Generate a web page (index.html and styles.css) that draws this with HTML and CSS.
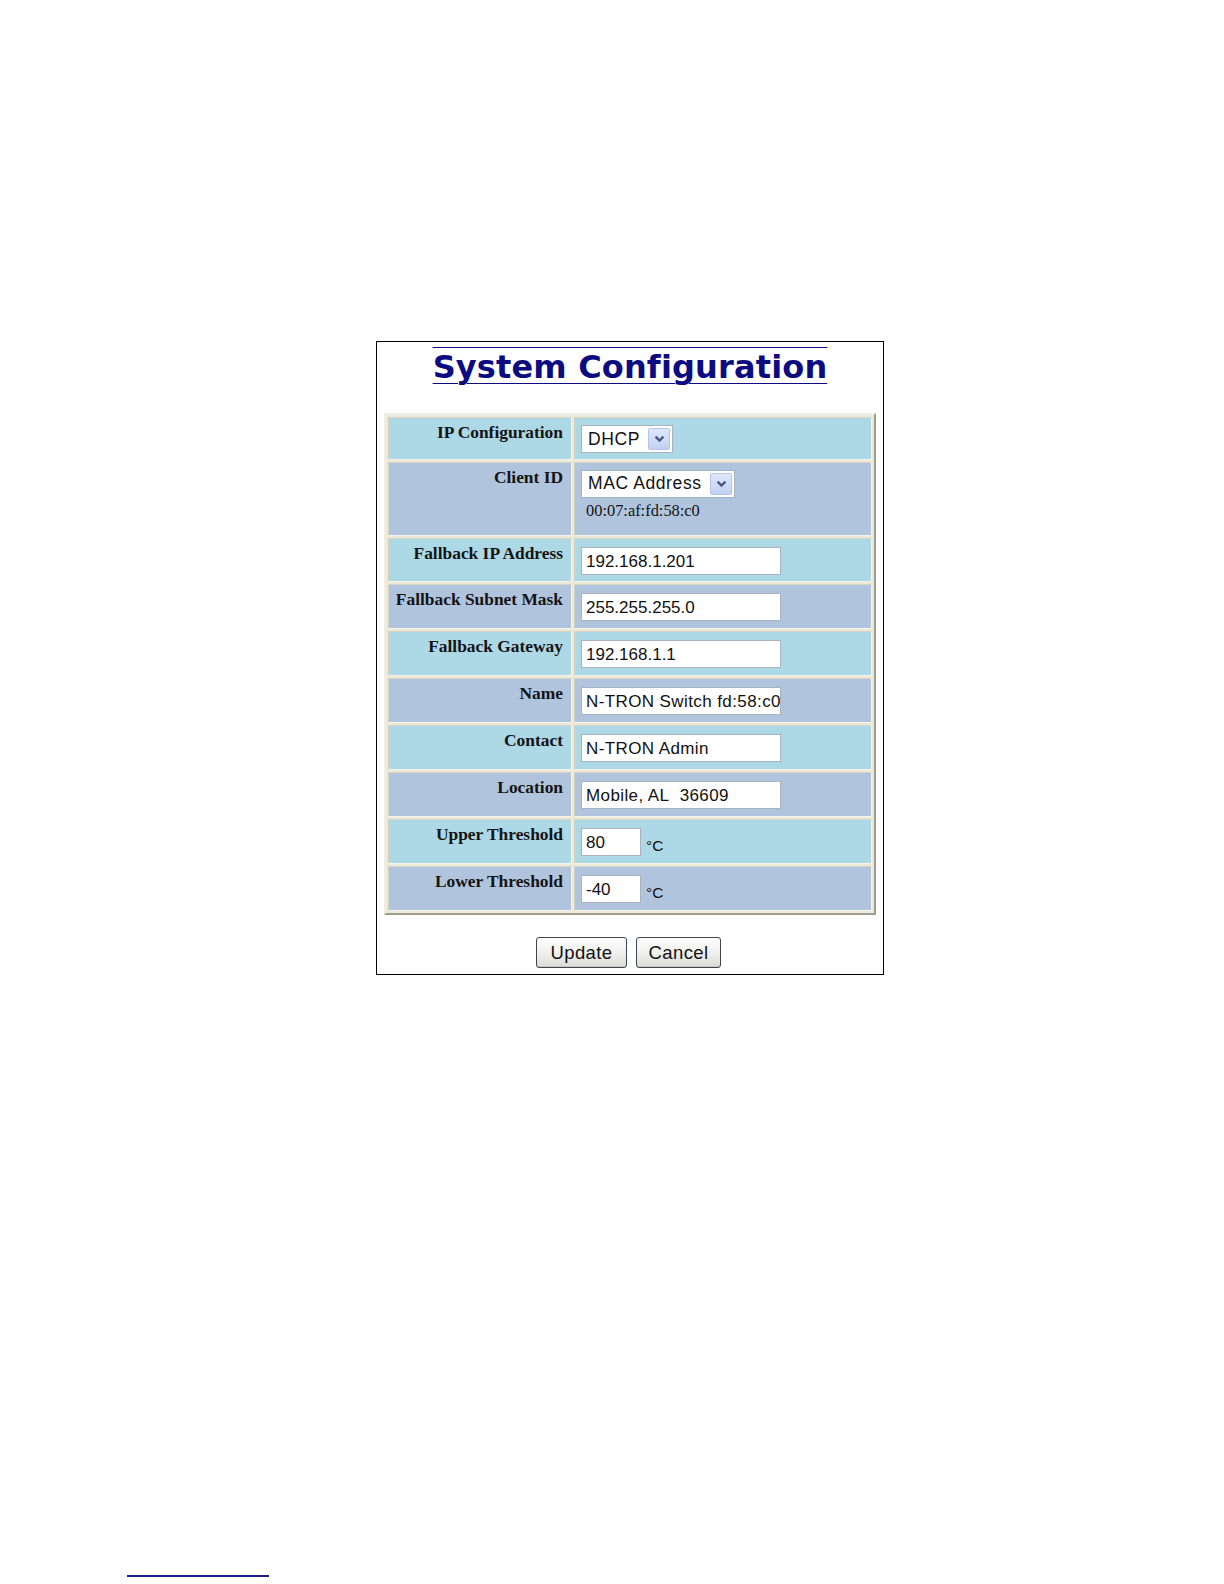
FILE: index.html
```html
<!DOCTYPE html>
<html>
<head>
<meta charset="utf-8">
<title>System Configuration</title>
<link rel="stylesheet" href="styles.css">
</head>
<body>
<div class="page">
  <div class="panel">
    <h1 class="title">System Configuration</h1>
    <table class="config">
      <tr class="row-a row-first">
        <td class="label">IP Configuration</td>
        <td class="value">
          <div class="select sel-dhcp"><span class="sel-text">DHCP</span><span class="sel-btn"><svg width="11" height="8" viewBox="0 0 11 8"><path d="M1.6 1.6 L5.5 5.6 L9.4 1.6" fill="none" stroke="#45597f" stroke-width="2.3"/></svg></span></div>
        </td>
      </tr>
      <tr class="row-b row-client">
        <td class="label">Client ID</td>
        <td class="value">
          <div class="select sel-mac"><span class="sel-text">MAC Address</span><span class="sel-btn"><svg width="11" height="8" viewBox="0 0 11 8"><path d="M1.6 1.6 L5.5 5.6 L9.4 1.6" fill="none" stroke="#45597f" stroke-width="2.3"/></svg></span></div>
          <div class="mac">00:07:af:fd:58:c0</div>
        </td>
      </tr>
      <tr class="row-a">
        <td class="label">Fallback IP Address</td>
        <td class="value"><div class="input wide">192.168.1.201</div></td>
      </tr>
      <tr class="row-b">
        <td class="label">Fallback Subnet Mask</td>
        <td class="value"><div class="input wide">255.255.255.0</div></td>
      </tr>
      <tr class="row-a">
        <td class="label">Fallback Gateway</td>
        <td class="value"><div class="input wide">192.168.1.1</div></td>
      </tr>
      <tr class="row-b">
        <td class="label">Name</td>
        <td class="value"><div class="input wide alpha">N-TRON Switch fd:58:c0</div></td>
      </tr>
      <tr class="row-a">
        <td class="label">Contact</td>
        <td class="value"><div class="input wide alpha">N-TRON Admin</div></td>
      </tr>
      <tr class="row-b">
        <td class="label">Location</td>
        <td class="value"><div class="input wide alpha">Mobile, AL&nbsp; 36609</div></td>
      </tr>
      <tr class="row-a">
        <td class="label">Upper Threshold</td>
        <td class="value"><div class="temp"><div class="input short">80</div><span class="unit">°C</span></div></td>
      </tr>
      <tr class="row-b">
        <td class="label">Lower Threshold</td>
        <td class="value"><div class="temp"><div class="input short">-40</div><span class="unit">°C</span></div></td>
      </tr>
    </table>
    <div class="buttons">
      <span class="btn btn-update">Update</span>
      <span class="btn btn-cancel">Cancel</span>
    </div>
  </div>
  <div class="footnote-rule"></div>
</div>
</body>
</html>
```

FILE: styles.css
```css
html, body {
  margin: 0;
  padding: 0;
  background: #ffffff;
}

.page {
  padding-top: 341px;
}

.panel {
  margin-left: 376px;
  width: 506px;
  height: 632px;
  border: 1px solid #000000;
  background: #ffffff;
  display: flex;
  flex-direction: column;
  align-items: center;
}

.title {
  margin: 5px 0 0 0;
  font-family: "DejaVu Sans", Verdana, sans-serif;
  font-weight: bold;
  font-size: 32px;
  line-height: 40px;
  color: #0c0c80;
  text-decoration: underline overline;
  text-decoration-thickness: 1px;
  text-underline-offset: 5px;
  letter-spacing: 0.15px;
}

.config {
  margin-top: 26px;
  width: 492px;
  border-collapse: separate;
  border-spacing: 2px;
  background: #ece9d8;
  border: 2px solid #c8c4b4;
  border-color: #f0eee4 #a09c90 #a09c90 #f0eee4;
}

.config td {
  vertical-align: top;
  border: 1px solid #f4f2ea;
  border-color: #d8d4c4 #f6f4ec #f6f4ec #d8d4c4;
}

.row-a td {
  background: #add8e6;
}

.row-b td {
  background: #b0c4de;
}

.label {
  width: 170px;
  text-align: right;
  font-family: "Liberation Serif", "Times New Roman", serif;
  font-weight: bold;
  font-size: 17.4px;
  line-height: 20px;
  color: #141414;
  padding: 4px 8px 0 4px;
  white-space: nowrap;
}

.value {
  padding: 8px 6px 6.95px 6px;
  font-family: "Liberation Sans", Arial, sans-serif;
}

.row-first .value {
  padding-top: 7px;
  padding-bottom: 5.5px;
}

.row-client .value {
  padding-top: 7px;
  padding-bottom: 7px;
}

.input {
  box-sizing: border-box;
  height: 28px;
  border: 1px solid #a9b3c0;
  background: #ffffff;
  font-family: "Liberation Sans", Arial, sans-serif;
  font-size: 17px;
  line-height: 27px;
  color: #111111;
  padding: 0 0 0 4px;
  white-space: nowrap;
  overflow: hidden;
}

.alpha {
  letter-spacing: 0.4px;
}

.wide {
  width: 200px;
}

.short {
  width: 60px;
}

.temp {
  display: flex;
  align-items: flex-end;
  gap: 5px;
}

.unit {
  font-family: "Liberation Sans", Arial, sans-serif;
  font-size: 15.5px;
  line-height: 17px;
  color: #111111;
  margin-bottom: 2px;
}

.select {
  box-sizing: border-box;
  height: 28px;
  display: flex;
  align-items: center;
  justify-content: space-between;
  border: 1px solid #a9b3c0;
  background: #ffffff;
  padding: 2px 2px 2px 6px;
}

.sel-dhcp {
  width: 92px;
}

.sel-mac {
  width: 154px;
}

.sel-text {
  font-family: "Liberation Sans", Arial, sans-serif;
  font-size: 17.5px;
  letter-spacing: 0.6px;
  color: #111111;
  white-space: nowrap;
}

.sel-btn {
  width: 22px;
  height: 22px;
  box-sizing: border-box;
  border: 1px solid #b4c4ea;
  border-radius: 2px;
  background: linear-gradient(#dfe8fb, #c2d1f3);
  display: flex;
  align-items: center;
  justify-content: center;
}

.mac {
  font-family: "Liberation Serif", "Times New Roman", serif;
  font-size: 16.4px;
  line-height: 19px;
  color: #141414;
  padding: 3px 0 8px 5px;
}

.buttons {
  margin-top: 22px;
  display: flex;
  gap: 9px;
  margin-right: 3px;
}

.btn {
  box-sizing: border-box;
  height: 31px;
  display: inline-flex;
  align-items: center;
  justify-content: center;
  border: 1px solid #3c4650;
  border-radius: 3px;
  background: linear-gradient(#fefefe, #f0f0ee 50%, #dcdcd6);
  box-shadow: inset 0 -1px 0 #c8c8c0;
  font-family: "Liberation Sans", Arial, sans-serif;
  font-size: 18.5px;
  letter-spacing: 0.4px;
  color: #111111;
}

.btn-update {
  width: 91px;
}

.btn-cancel {
  width: 85px;
}

.footnote-rule {
  margin: 600px 0 0 127px;
  width: 142px;
  height: 2px;
  background: #1c1c8c;
}
```
